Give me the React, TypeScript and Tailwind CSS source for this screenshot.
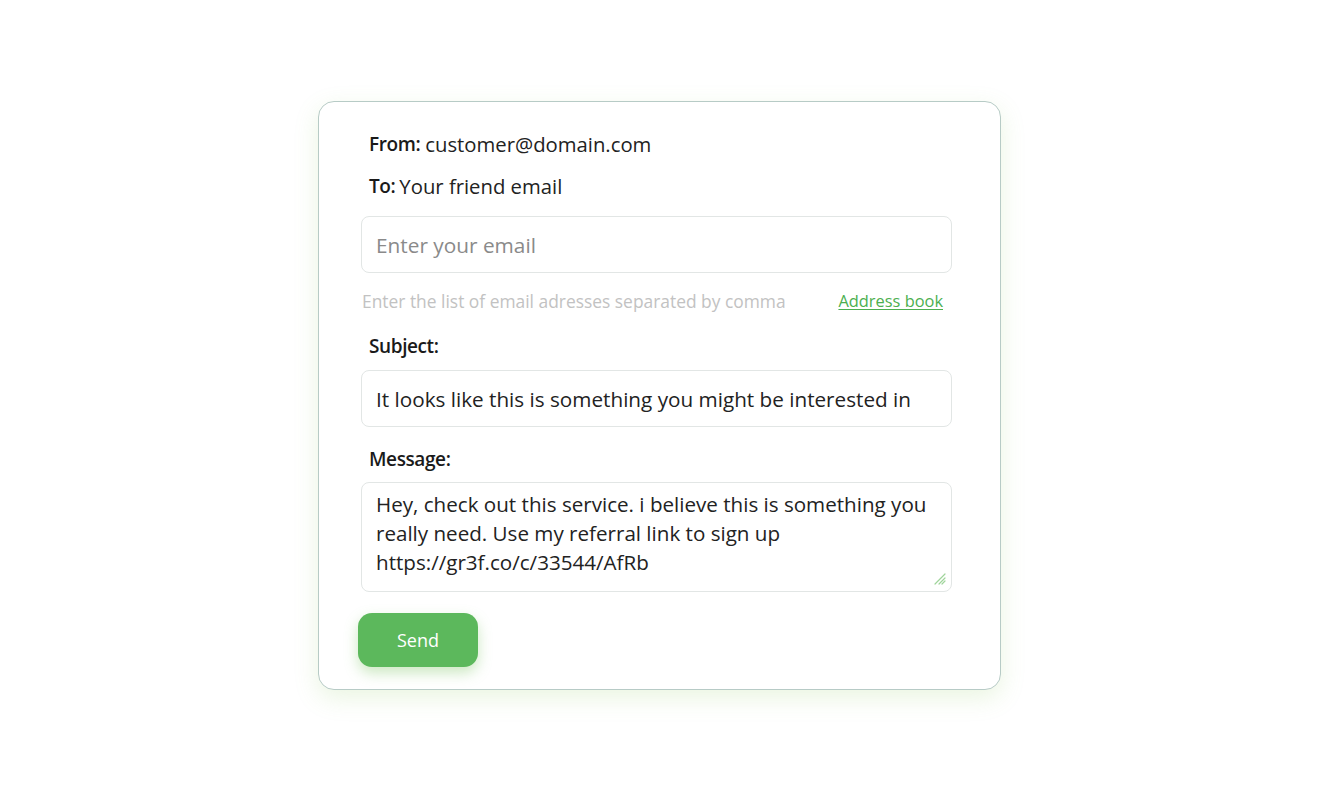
import React from 'react';

const labelCls = "text-[19px] font-semibold text-[#1a1a1a] font-['Open_Sans',sans-serif] tracking-[-0.4px]";

export default function App() {
  const [email, setEmail] = React.useState('');
  const [subject, setSubject] = React.useState('It looks like this is something you might be interested in');
  const [message, setMessage] = React.useState(
    'Hey, check out this service. i believe this is something you really need. Use my referral link to sign up https://gr3f.co/c/33544/AfRb'
  );

  return (
    <div className="min-h-screen w-full bg-white pt-[101px] font-['Open_Sans',sans-serif]">
      <div className="ml-[318px] w-[683px] h-[589px] rounded-[16px] border-[1.5px] border-[#b7cbc6] bg-white shadow-[0_8px_24px_rgba(140,200,90,0.18)] pl-[42px] pr-[48px] pt-[26px]">
        {/* From / To */}
        <div className="pl-[8px] flex flex-col gap-[10px]">
          <div className="h-[32px] flex items-center gap-[5px]">
            <span className={labelCls}>From:</span>
            <span className="text-[20.3px] text-[#222]">customer@domain.com</span>
          </div>
          <div className="h-[32px] flex items-center gap-[4px]">
            <span className={labelCls}>To:</span>
            <span className="text-[20.3px] text-[#222]">Your friend email</span>
          </div>
        </div>

        {/* Email input */}
        <input
          value={email}
          onChange={(e) => setEmail(e.target.value)}
          placeholder="Enter your email"
          className="block mt-[14px] w-full h-[57px] rounded-[8px] border-[1.5px] border-[#e2e6e5] px-[14px] text-[20.8px] text-[#222] placeholder:text-[#8a8a8a] outline-none"
        />
        <div className="mt-[16px] h-[24px] flex items-center justify-between pl-[1px] pr-[9px]">
          <span className="text-[17.4px] text-[#c2c2c2]">Enter the list of email adresses separated by comma</span>
          <a href="#" className="text-[16.4px] text-[#4caf50] underline underline-offset-2">Address book</a>
        </div>

        {/* Subject */}
        <div className={`${labelCls} pl-[8px] mt-[19px] h-[28px] flex items-center`}>Subject:</div>
        <input
          value={subject}
          onChange={(e) => setSubject(e.target.value)}
          className="block mt-[10px] w-full h-[57px] rounded-[8px] border-[1.5px] border-[#e2e6e5] px-[14px] text-[20.7px] text-[#222] outline-none"
        />

        {/* Message */}
        <div className={`${labelCls} pl-[8px] mt-[18px] h-[28px] flex items-center`}>Message:</div>
        <div className="relative mt-[9px]">
          <textarea
            value={message}
            onChange={(e) => setMessage(e.target.value)}
            className="block w-full h-[110px] resize-none rounded-[8px] border-[1.5px] border-[#e2e6e5] px-[14px] pt-[7px] text-[20.6px] leading-[29px] text-[#222] outline-none"
          />
          <svg className="absolute right-[6px] bottom-[7px]" width="14" height="14" viewBox="0 0 14 14">
            <path d="M13 3 L3 13 M13 7 L7 13 M13 10 L10 13" stroke="#9fd49a" strokeWidth="1.2" strokeLinecap="round" />
          </svg>
        </div>

        {/* Send */}
        <button className="block mt-[21px] -ml-[3px] w-[120px] h-[54px] rounded-[14px] bg-[#5cb85c] text-white text-[18px] shadow-[0_6px_14px_rgba(110,190,80,0.35)]">
          Send
        </button>
      </div>
    </div>
  );
}
